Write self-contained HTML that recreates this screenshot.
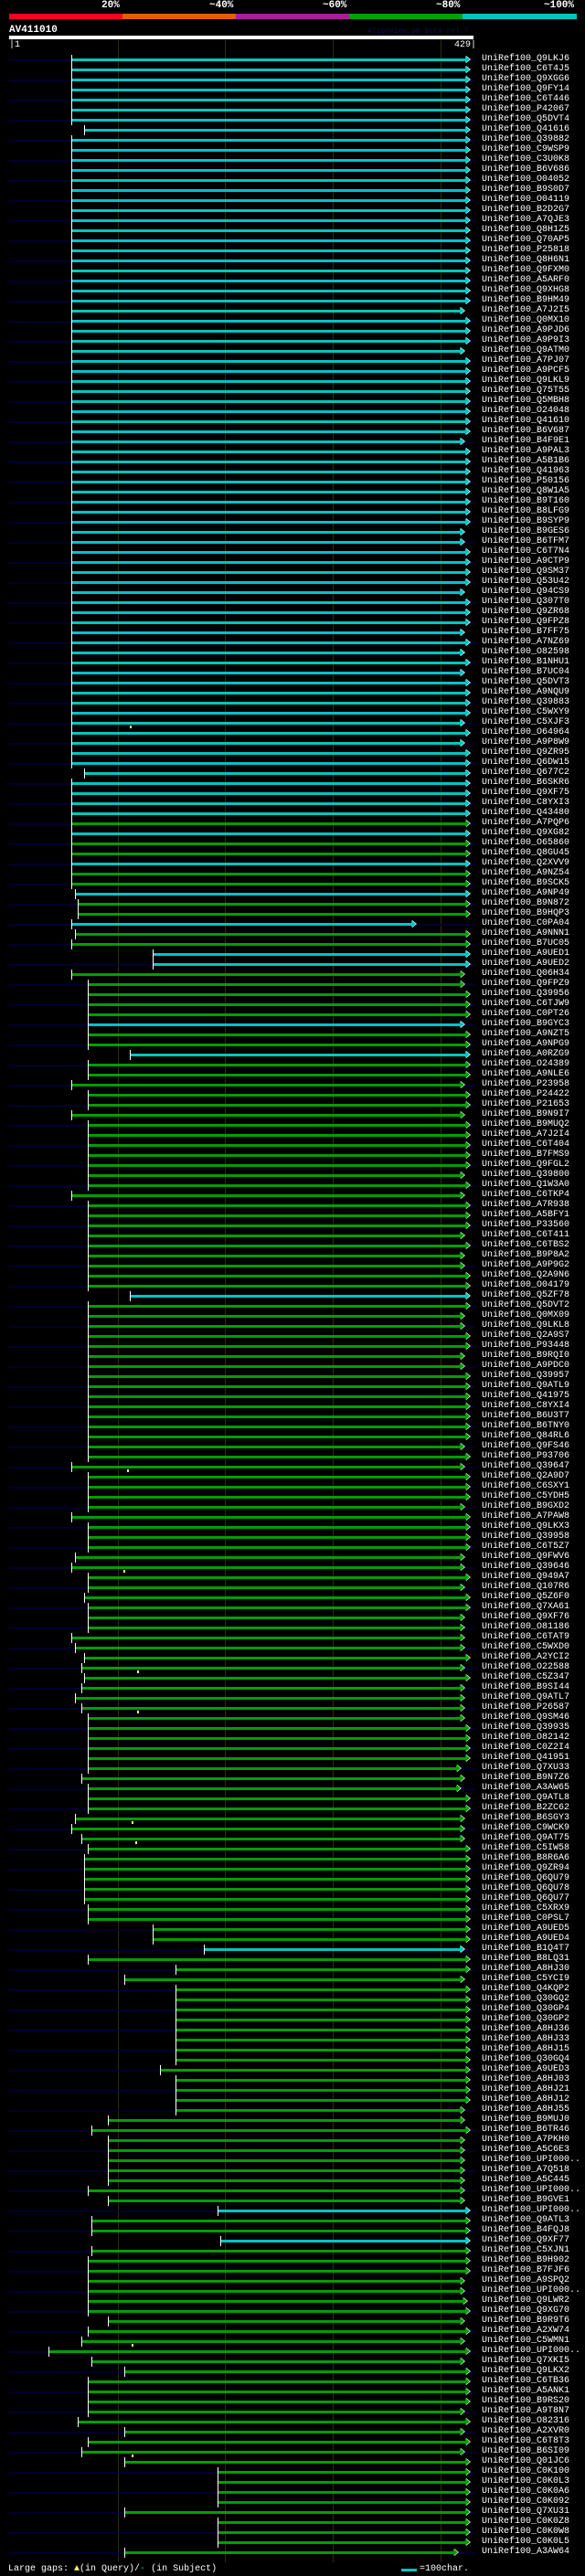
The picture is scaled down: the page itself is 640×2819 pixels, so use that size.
<!DOCTYPE html>
<html><head><meta charset="utf-8"><style>
html,body{margin:0;padding:0;background:#000;}
body{width:640px;height:2819px;position:relative;overflow:hidden;font-family:"Liberation Mono","DejaVu Sans Mono",monospace;color:#fff;}
.hdr{position:absolute;font-weight:bold;font-size:11px;line-height:11px;}
.seg{position:absolute;top:15px;height:6px;}
.grid{position:absolute;top:44px;height:2760px;width:1px;background:#2e2e08;}
#rows{position:absolute;left:0;top:60px;width:640px;}
.r{position:relative;height:11px;width:640px;--e:510px;}
.c{--s:78px;--col:#00c4c4;}
.g{--s:96px;--col:#009e00;}
.n::before{content:"";position:absolute;left:10px;width:510px;top:5px;height:2px;background:#000030;}
.r b{position:absolute;left:var(--s);width:calc(var(--e) - var(--s));top:4px;height:3px;background:var(--col);}
.r b::before{content:"";position:absolute;left:0;top:-4px;width:1px;height:11px;background:#fff;}
.r b::after{content:"";position:absolute;left:100%;top:-3px;border-left:5px solid var(--col);border-top:4.5px solid transparent;border-bottom:4.5px solid transparent;margin-left:-1px;filter:drop-shadow(1px 0 0 #fff);}
.r i{position:absolute;left:527px;top:-1px;font-style:normal;font-size:10px;line-height:12px;color:#fff;white-space:nowrap;}
.r u{position:absolute;top:8px;width:2px;height:3px;background:#ffff66;}
</style></head><body>
<div class="hdr" style="left:111px;top:1px">20%</div>
<div class="hdr" style="left:229px;top:1px">~40%</div>
<div class="hdr" style="left:353px;top:1px">~60%</div>
<div class="hdr" style="left:477px;top:1px">~80%</div>
<div class="hdr" style="left:595px;top:1px">~100%</div>
<div class="seg" style="left:10px;width:124px;background:#ff0020"></div>
<div class="seg" style="left:134px;width:124px;background:#e06000"></div>
<div class="seg" style="left:258px;width:124px;background:#a020a0"></div>
<div class="seg" style="left:382px;width:124px;background:#00a000"></div>
<div class="seg" style="left:506px;width:125px;background:#00c4c4"></div>
<div class="hdr" style="left:10px;top:28px;font-size:11px">AV411010</div>
<div style="position:absolute;left:402px;top:30px;font-size:8px;color:#101050">AlignView.pm Beta rel.7</div>
<div style="position:absolute;left:10px;top:39px;width:508px;height:4px;background:#fff"></div>
<div style="position:absolute;left:10px;top:44px;font-size:10px;line-height:11px">|1</div>
<div style="position:absolute;left:497px;top:44px;font-size:10px;line-height:11px">429|</div>
<div class="grid" style="left:129px"></div>
<div class="grid" style="left:246px"></div>
<div class="grid" style="left:364px"></div>
<div class="grid" style="left:482px"></div>
<div id="rows">
<div class="r n c"><b></b><i>UniRef100_Q9LKJ6</i></div>
<div class="r c"><b></b><i>UniRef100_C6T4J5</i></div>
<div class="r n c"><b></b><i>UniRef100_Q9XGG6</i></div>
<div class="r c"><b></b><i>UniRef100_Q9FY14</i></div>
<div class="r n c"><b></b><i>UniRef100_C6T446</i></div>
<div class="r c"><b></b><i>UniRef100_P42067</i></div>
<div class="r n c"><b></b><i>UniRef100_Q5DVT4</i></div>
<div class="r c" style="--s:92px"><b></b><i>UniRef100_Q41616</i></div>
<div class="r n c"><b></b><i>UniRef100_Q39882</i></div>
<div class="r c"><b></b><i>UniRef100_C9WSP9</i></div>
<div class="r n c"><b></b><i>UniRef100_C3U0K8</i></div>
<div class="r c"><b></b><i>UniRef100_B6V686</i></div>
<div class="r n c"><b></b><i>UniRef100_O04052</i></div>
<div class="r c"><b></b><i>UniRef100_B9S0D7</i></div>
<div class="r n c"><b></b><i>UniRef100_O04119</i></div>
<div class="r c"><b></b><i>UniRef100_B2D2G7</i></div>
<div class="r n c"><b></b><i>UniRef100_A7QJE3</i></div>
<div class="r c"><b></b><i>UniRef100_Q8H1Z5</i></div>
<div class="r n c"><b></b><i>UniRef100_Q70AP5</i></div>
<div class="r c"><b></b><i>UniRef100_P25818</i></div>
<div class="r n c"><b></b><i>UniRef100_Q8H6N1</i></div>
<div class="r c"><b></b><i>UniRef100_Q9FXM0</i></div>
<div class="r n c"><b></b><i>UniRef100_A5ARF0</i></div>
<div class="r c"><b></b><i>UniRef100_Q9XHG8</i></div>
<div class="r n c"><b></b><i>UniRef100_B9HM49</i></div>
<div class="r c" style="--e:504px"><b></b><i>UniRef100_A7J2I5</i></div>
<div class="r n c"><b></b><i>UniRef100_Q0MX10</i></div>
<div class="r c"><b></b><i>UniRef100_A9PJD6</i></div>
<div class="r n c"><b></b><i>UniRef100_A9P9I3</i></div>
<div class="r c" style="--e:504px"><b></b><i>UniRef100_Q9ATM0</i></div>
<div class="r n c"><b></b><i>UniRef100_A7PJ07</i></div>
<div class="r c"><b></b><i>UniRef100_A9PCF5</i></div>
<div class="r n c"><b></b><i>UniRef100_Q9LKL9</i></div>
<div class="r c"><b></b><i>UniRef100_Q75T55</i></div>
<div class="r n c"><b></b><i>UniRef100_Q5MBH8</i></div>
<div class="r c"><b></b><i>UniRef100_O24048</i></div>
<div class="r n c"><b></b><i>UniRef100_Q41610</i></div>
<div class="r c"><b></b><i>UniRef100_B6V687</i></div>
<div class="r n c" style="--e:504px"><b></b><i>UniRef100_B4F9E1</i></div>
<div class="r c"><b></b><i>UniRef100_A9PAL3</i></div>
<div class="r n c"><b></b><i>UniRef100_A5B1B6</i></div>
<div class="r c"><b></b><i>UniRef100_Q41963</i></div>
<div class="r n c"><b></b><i>UniRef100_P50156</i></div>
<div class="r c"><b></b><i>UniRef100_Q8W1A5</i></div>
<div class="r n c"><b></b><i>UniRef100_B9T160</i></div>
<div class="r c"><b></b><i>UniRef100_B8LFG9</i></div>
<div class="r n c"><b></b><i>UniRef100_B9SYP9</i></div>
<div class="r c" style="--e:504px"><b></b><i>UniRef100_B9GES6</i></div>
<div class="r n c" style="--e:504px"><b></b><i>UniRef100_B6TFM7</i></div>
<div class="r c"><b></b><i>UniRef100_C6T7N4</i></div>
<div class="r n c"><b></b><i>UniRef100_A9CTP9</i></div>
<div class="r c"><b></b><i>UniRef100_Q9SM37</i></div>
<div class="r n c"><b></b><i>UniRef100_Q53U42</i></div>
<div class="r c" style="--e:504px"><b></b><i>UniRef100_Q94CS9</i></div>
<div class="r n c"><b></b><i>UniRef100_Q307T0</i></div>
<div class="r c"><b></b><i>UniRef100_Q9ZR68</i></div>
<div class="r n c"><b></b><i>UniRef100_Q9FPZ8</i></div>
<div class="r c" style="--e:504px"><b></b><i>UniRef100_B7FF75</i></div>
<div class="r n c"><b></b><i>UniRef100_A7NZ69</i></div>
<div class="r c" style="--e:504px"><b></b><i>UniRef100_O82598</i></div>
<div class="r n c"><b></b><i>UniRef100_B1NHU1</i></div>
<div class="r c" style="--e:504px"><b></b><i>UniRef100_B7UC04</i></div>
<div class="r n c"><b></b><i>UniRef100_Q5DVT3</i></div>
<div class="r c"><b></b><i>UniRef100_A9NQU9</i></div>
<div class="r n c"><b></b><i>UniRef100_Q39883</i></div>
<div class="r c"><b></b><i>UniRef100_C5WXY9</i></div>
<div class="r n c" style="--e:504px"><b></b><u style="left:142px"></u><i>UniRef100_C5XJF3</i></div>
<div class="r c"><b></b><i>UniRef100_O64964</i></div>
<div class="r n c" style="--e:504px"><b></b><i>UniRef100_A9P8W9</i></div>
<div class="r c"><b></b><i>UniRef100_Q9ZR95</i></div>
<div class="r n c"><b></b><i>UniRef100_Q6DW15</i></div>
<div class="r c" style="--s:92px"><b></b><i>UniRef100_Q677C2</i></div>
<div class="r n c"><b></b><i>UniRef100_B6SKR6</i></div>
<div class="r c"><b></b><i>UniRef100_Q9XF75</i></div>
<div class="r n c"><b></b><i>UniRef100_C8YXI3</i></div>
<div class="r c"><b></b><i>UniRef100_Q43480</i></div>
<div class="r n g" style="--s:78px"><b></b><i>UniRef100_A7PQP6</i></div>
<div class="r c"><b></b><i>UniRef100_Q9XG82</i></div>
<div class="r n g" style="--s:78px"><b></b><i>UniRef100_O65860</i></div>
<div class="r g" style="--s:78px"><b></b><i>UniRef100_Q8GU45</i></div>
<div class="r n c"><b></b><i>UniRef100_Q2XVV9</i></div>
<div class="r g" style="--s:78px"><b></b><i>UniRef100_A9NZ54</i></div>
<div class="r n g" style="--s:78px"><b></b><i>UniRef100_B9SCK5</i></div>
<div class="r c" style="--s:82px"><b></b><i>UniRef100_A9NP49</i></div>
<div class="r n g" style="--s:85px"><b></b><i>UniRef100_B9N872</i></div>
<div class="r g" style="--s:85px"><b></b><i>UniRef100_B9HQP3</i></div>
<div class="r n c" style="--e:451px"><b></b><i>UniRef100_C0PA04</i></div>
<div class="r g" style="--s:82px"><b></b><i>UniRef100_A9NNN1</i></div>
<div class="r n g" style="--s:78px"><b></b><i>UniRef100_B7UC05</i></div>
<div class="r c" style="--s:167px"><b></b><i>UniRef100_A9UED1</i></div>
<div class="r n c" style="--s:167px"><b></b><i>UniRef100_A9UED2</i></div>
<div class="r g" style="--s:78px;--e:504px"><b></b><i>UniRef100_Q06H34</i></div>
<div class="r n g" style="--e:504px"><b></b><i>UniRef100_Q9FPZ9</i></div>
<div class="r g"><b></b><i>UniRef100_Q39956</i></div>
<div class="r n g"><b></b><i>UniRef100_C6TJW9</i></div>
<div class="r g"><b></b><i>UniRef100_C0PT26</i></div>
<div class="r n c" style="--s:96px;--e:504px"><b></b><i>UniRef100_B9GYC3</i></div>
<div class="r g"><b></b><i>UniRef100_A9NZT5</i></div>
<div class="r n g"><b></b><i>UniRef100_A9NPG9</i></div>
<div class="r c" style="--s:142px"><b></b><i>UniRef100_A0RZG9</i></div>
<div class="r n g"><b></b><i>UniRef100_O24389</i></div>
<div class="r g"><b></b><i>UniRef100_A9NLE6</i></div>
<div class="r n g" style="--s:78px;--e:504px"><b></b><i>UniRef100_P23958</i></div>
<div class="r g"><b></b><i>UniRef100_P24422</i></div>
<div class="r n g"><b></b><i>UniRef100_P21653</i></div>
<div class="r g" style="--s:78px;--e:504px"><b></b><i>UniRef100_B9N9I7</i></div>
<div class="r n g"><b></b><i>UniRef100_B9MUQ2</i></div>
<div class="r g"><b></b><i>UniRef100_A7J2I4</i></div>
<div class="r n g"><b></b><i>UniRef100_C6T404</i></div>
<div class="r g"><b></b><i>UniRef100_B7FMS9</i></div>
<div class="r n g"><b></b><i>UniRef100_Q9FGL2</i></div>
<div class="r g" style="--e:504px"><b></b><i>UniRef100_Q39800</i></div>
<div class="r n g"><b></b><i>UniRef100_Q1W3A0</i></div>
<div class="r g" style="--s:78px;--e:504px"><b></b><i>UniRef100_C6TKP4</i></div>
<div class="r n g"><b></b><i>UniRef100_A7R938</i></div>
<div class="r g"><b></b><i>UniRef100_A5BFY1</i></div>
<div class="r n g"><b></b><i>UniRef100_P33560</i></div>
<div class="r g" style="--e:504px"><b></b><i>UniRef100_C6T411</i></div>
<div class="r n g"><b></b><i>UniRef100_C6TBS2</i></div>
<div class="r g" style="--e:504px"><b></b><i>UniRef100_B9P8A2</i></div>
<div class="r n g" style="--e:504px"><b></b><i>UniRef100_A9P9G2</i></div>
<div class="r g"><b></b><i>UniRef100_Q2A9N6</i></div>
<div class="r n g"><b></b><i>UniRef100_O04179</i></div>
<div class="r c" style="--s:142px"><b></b><i>UniRef100_Q5ZF78</i></div>
<div class="r n g"><b></b><i>UniRef100_Q5DVT2</i></div>
<div class="r g" style="--e:504px"><b></b><i>UniRef100_Q0MX09</i></div>
<div class="r n g" style="--e:504px"><b></b><i>UniRef100_Q9LKL8</i></div>
<div class="r g"><b></b><i>UniRef100_Q2A9S7</i></div>
<div class="r n g"><b></b><i>UniRef100_P93448</i></div>
<div class="r g" style="--e:504px"><b></b><i>UniRef100_B9RQI0</i></div>
<div class="r n g" style="--e:504px"><b></b><i>UniRef100_A9PDC0</i></div>
<div class="r g"><b></b><i>UniRef100_Q39957</i></div>
<div class="r n g"><b></b><i>UniRef100_Q9ATL9</i></div>
<div class="r g"><b></b><i>UniRef100_Q41975</i></div>
<div class="r n g"><b></b><i>UniRef100_C8YXI4</i></div>
<div class="r g"><b></b><i>UniRef100_B6U3T7</i></div>
<div class="r n g"><b></b><i>UniRef100_B6TNY0</i></div>
<div class="r g"><b></b><i>UniRef100_Q84RL6</i></div>
<div class="r n g" style="--e:504px"><b></b><i>UniRef100_Q9FS46</i></div>
<div class="r g"><b></b><i>UniRef100_P93706</i></div>
<div class="r n g" style="--s:78px;--e:504px"><b></b><u style="left:139px"></u><i>UniRef100_Q39647</i></div>
<div class="r g"><b></b><i>UniRef100_Q2A9D7</i></div>
<div class="r n g"><b></b><i>UniRef100_C6SXY1</i></div>
<div class="r g"><b></b><i>UniRef100_C5YDH5</i></div>
<div class="r n g" style="--e:504px"><b></b><i>UniRef100_B9GXD2</i></div>
<div class="r g" style="--s:78px"><b></b><i>UniRef100_A7PAW8</i></div>
<div class="r n g"><b></b><i>UniRef100_Q9LKX3</i></div>
<div class="r g"><b></b><i>UniRef100_Q39958</i></div>
<div class="r n g"><b></b><i>UniRef100_C6T5Z7</i></div>
<div class="r g" style="--s:82px;--e:504px"><b></b><i>UniRef100_Q9FWV6</i></div>
<div class="r n g" style="--s:78px;--e:504px"><b></b><u style="left:135px"></u><i>UniRef100_Q39646</i></div>
<div class="r g"><b></b><i>UniRef100_Q949A7</i></div>
<div class="r n g" style="--e:504px"><b></b><i>UniRef100_Q107R6</i></div>
<div class="r g" style="--s:92px"><b></b><i>UniRef100_Q5Z6F0</i></div>
<div class="r n g"><b></b><i>UniRef100_Q7XA61</i></div>
<div class="r g" style="--e:504px"><b></b><i>UniRef100_Q9XF76</i></div>
<div class="r n g" style="--e:504px"><b></b><i>UniRef100_O81186</i></div>
<div class="r g" style="--s:78px;--e:504px"><b></b><i>UniRef100_C6TAT9</i></div>
<div class="r n g" style="--s:82px;--e:504px"><b></b><i>UniRef100_C5WXD0</i></div>
<div class="r g" style="--s:92px"><b></b><i>UniRef100_A2YCI2</i></div>
<div class="r n g" style="--s:89px;--e:504px"><b></b><u style="left:150px"></u><i>UniRef100_O22588</i></div>
<div class="r g" style="--s:92px"><b></b><i>UniRef100_C5Z347</i></div>
<div class="r n g" style="--s:89px;--e:504px"><b></b><i>UniRef100_B9SI44</i></div>
<div class="r g" style="--s:82px;--e:504px"><b></b><i>UniRef100_Q9ATL7</i></div>
<div class="r n g" style="--s:89px;--e:504px"><b></b><u style="left:150px"></u><i>UniRef100_P26587</i></div>
<div class="r g" style="--e:504px"><b></b><i>UniRef100_Q9SM46</i></div>
<div class="r n g"><b></b><i>UniRef100_Q39935</i></div>
<div class="r g"><b></b><i>UniRef100_O82142</i></div>
<div class="r n g"><b></b><i>UniRef100_C0Z2I4</i></div>
<div class="r g"><b></b><i>UniRef100_Q41951</i></div>
<div class="r n g" style="--e:500px"><b></b><i>UniRef100_Q7XU33</i></div>
<div class="r g" style="--s:89px;--e:504px"><b></b><i>UniRef100_B9N7Z6</i></div>
<div class="r n g" style="--e:500px"><b></b><i>UniRef100_A3AW65</i></div>
<div class="r g"><b></b><i>UniRef100_Q9ATL8</i></div>
<div class="r n g"><b></b><i>UniRef100_B2ZC62</i></div>
<div class="r g" style="--s:82px;--e:504px"><b></b><u style="left:144px"></u><i>UniRef100_B6SGY3</i></div>
<div class="r n g" style="--s:78px;--e:504px"><b></b><i>UniRef100_C9WCK9</i></div>
<div class="r g" style="--s:89px;--e:504px"><b></b><u style="left:148px"></u><i>UniRef100_Q9AT75</i></div>
<div class="r n g"><b></b><i>UniRef100_C5IW58</i></div>
<div class="r g" style="--s:92px"><b></b><i>UniRef100_B8R6A6</i></div>
<div class="r n g" style="--s:92px"><b></b><i>UniRef100_Q9ZR94</i></div>
<div class="r g" style="--s:92px"><b></b><i>UniRef100_Q6QU79</i></div>
<div class="r n g" style="--s:92px"><b></b><i>UniRef100_Q6QU78</i></div>
<div class="r g" style="--s:92px"><b></b><i>UniRef100_Q6QU77</i></div>
<div class="r n g"><b></b><i>UniRef100_C5XRX9</i></div>
<div class="r g"><b></b><i>UniRef100_C0PSL7</i></div>
<div class="r n g" style="--s:167px"><b></b><i>UniRef100_A9UED5</i></div>
<div class="r g" style="--s:167px"><b></b><i>UniRef100_A9UED4</i></div>
<div class="r n c" style="--s:223px;--e:504px"><b></b><i>UniRef100_B1Q4T7</i></div>
<div class="r g"><b></b><i>UniRef100_B8LQ31</i></div>
<div class="r n g" style="--s:192px"><b></b><i>UniRef100_A8HJ30</i></div>
<div class="r g" style="--s:136px;--e:504px"><b></b><i>UniRef100_C5YCI9</i></div>
<div class="r n g" style="--s:192px"><b></b><i>UniRef100_Q4KQP2</i></div>
<div class="r g" style="--s:192px"><b></b><i>UniRef100_Q30GQ2</i></div>
<div class="r n g" style="--s:192px"><b></b><i>UniRef100_Q30GP4</i></div>
<div class="r g" style="--s:192px"><b></b><i>UniRef100_Q30GP2</i></div>
<div class="r n g" style="--s:192px"><b></b><i>UniRef100_A8HJ36</i></div>
<div class="r g" style="--s:192px"><b></b><i>UniRef100_A8HJ33</i></div>
<div class="r n g" style="--s:192px"><b></b><i>UniRef100_A8HJ15</i></div>
<div class="r g" style="--s:192px"><b></b><i>UniRef100_Q30GQ4</i></div>
<div class="r n g" style="--s:175px"><b></b><i>UniRef100_A9UED3</i></div>
<div class="r g" style="--s:192px"><b></b><i>UniRef100_A8HJ03</i></div>
<div class="r n g" style="--s:192px"><b></b><i>UniRef100_A8HJ21</i></div>
<div class="r g" style="--s:192px"><b></b><i>UniRef100_A8HJ12</i></div>
<div class="r n g" style="--s:192px;--e:504px"><b></b><i>UniRef100_A8HJ55</i></div>
<div class="r g" style="--s:118px;--e:504px"><b></b><i>UniRef100_B9MUJ0</i></div>
<div class="r n g" style="--s:100px"><b></b><i>UniRef100_B6TR46</i></div>
<div class="r g" style="--s:118px;--e:504px"><b></b><i>UniRef100_A7PKH0</i></div>
<div class="r n g" style="--s:118px;--e:504px"><b></b><i>UniRef100_A5C6E3</i></div>
<div class="r g" style="--s:118px;--e:504px"><b></b><i>UniRef100_UPI000..</i></div>
<div class="r n g" style="--s:118px;--e:504px"><b></b><i>UniRef100_A7Q518</i></div>
<div class="r g" style="--s:118px;--e:504px"><b></b><i>UniRef100_A5C445</i></div>
<div class="r n g" style="--e:504px"><b></b><i>UniRef100_UPI000..</i></div>
<div class="r g" style="--s:118px;--e:504px"><b></b><i>UniRef100_B9GVE1</i></div>
<div class="r n c" style="--s:238px"><b></b><i>UniRef100_UPI000..</i></div>
<div class="r g" style="--s:100px"><b></b><i>UniRef100_Q9ATL3</i></div>
<div class="r n g" style="--s:100px"><b></b><i>UniRef100_B4FQJ8</i></div>
<div class="r c" style="--s:241px"><b></b><i>UniRef100_Q9XF77</i></div>
<div class="r n g" style="--s:100px"><b></b><i>UniRef100_C5XJN1</i></div>
<div class="r g"><b></b><i>UniRef100_B9H902</i></div>
<div class="r n g"><b></b><i>UniRef100_B7FJF6</i></div>
<div class="r g" style="--e:504px"><b></b><i>UniRef100_A9SPQ2</i></div>
<div class="r n g" style="--e:504px"><b></b><i>UniRef100_UPI000..</i></div>
<div class="r g" style="--e:507px"><b></b><i>UniRef100_Q9LWR2</i></div>
<div class="r n g"><b></b><i>UniRef100_Q9XG70</i></div>
<div class="r g" style="--s:118px;--e:504px"><b></b><i>UniRef100_B9R9T6</i></div>
<div class="r n g"><b></b><i>UniRef100_A2XW74</i></div>
<div class="r g" style="--s:89px;--e:504px"><b></b><u style="left:144px"></u><i>UniRef100_C5WMN1</i></div>
<div class="r n g" style="--s:53px"><b></b><i>UniRef100_UPI000..</i></div>
<div class="r g" style="--s:100px;--e:504px"><b></b><i>UniRef100_Q7XKI5</i></div>
<div class="r n g" style="--s:136px"><b></b><i>UniRef100_Q9LKX2</i></div>
<div class="r g"><b></b><i>UniRef100_C6TB36</i></div>
<div class="r n g"><b></b><i>UniRef100_A5ANK1</i></div>
<div class="r g"><b></b><i>UniRef100_B9RS20</i></div>
<div class="r n g" style="--e:504px"><b></b><i>UniRef100_A9T8N7</i></div>
<div class="r g" style="--s:85px"><b></b><i>UniRef100_O82316</i></div>
<div class="r n g" style="--s:136px;--e:504px"><b></b><i>UniRef100_A2XVR0</i></div>
<div class="r g"><b></b><i>UniRef100_C6T8T3</i></div>
<div class="r n g" style="--s:89px;--e:504px"><b></b><u style="left:144px"></u><i>UniRef100_B6SI09</i></div>
<div class="r g" style="--s:136px"><b></b><i>UniRef100_Q01JC6</i></div>
<div class="r n g" style="--s:238px"><b></b><i>UniRef100_C0K100</i></div>
<div class="r g" style="--s:238px"><b></b><i>UniRef100_C0K0L3</i></div>
<div class="r n g" style="--s:238px"><b></b><i>UniRef100_C0K0A6</i></div>
<div class="r g" style="--s:238px"><b></b><i>UniRef100_C0K092</i></div>
<div class="r n g" style="--s:136px"><b></b><i>UniRef100_Q7XU31</i></div>
<div class="r g" style="--s:238px"><b></b><i>UniRef100_C0K0Z8</i></div>
<div class="r n g" style="--s:238px"><b></b><i>UniRef100_C0K0W8</i></div>
<div class="r g" style="--s:238px"><b></b><i>UniRef100_C0K0L5</i></div>
<div class="r n g" style="--s:136px;--e:497px"><b></b><i>UniRef100_A3AW64</i></div>
</div>
<div style="position:absolute;left:9px;top:2806px;font-size:10px;line-height:12px;white-space:nowrap">Large gaps: <span style="color:#ffff66">&#9650;</span>(in Query)/<span style="color:#00c4c4">-</span> (in Subject)</div>
<div style="position:absolute;left:439px;top:2811px;width:17px;height:3px;background:#00c4c4"></div>
<div style="position:absolute;left:459px;top:2806px;font-size:10px;line-height:12px">=100char.</div>
</body></html>
